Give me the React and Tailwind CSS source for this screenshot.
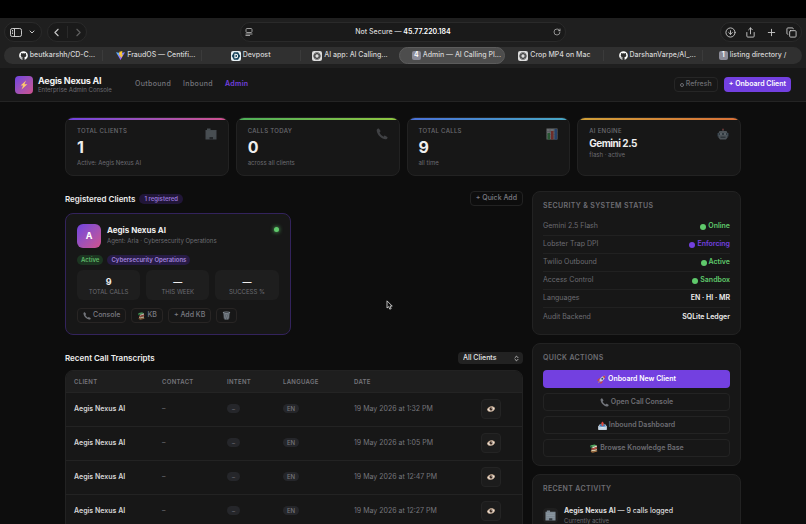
import { ChevronDown, ChevronLeft, ChevronRight, ChevronsUpDown, CircleArrowDown, Copy, Plus, RotateCw, Share } from 'lucide-react'
import { FaGithub } from 'react-icons/fa'

const tabs = [
  { title: 'beutkarshh/CD-C...', icon: 'github', pad: true, line: true },
  { title: 'FraudOS — Centifi...', icon: 'vite', pad: true, line: true },
  { title: 'Devpost', icon: 'devpost', line: true },
  { title: 'AI app: AI Calling...', icon: 'knot' },
  { title: 'Admin — AI Calling Pl...', icon: '4', active: true },
  { title: 'Crop MP4 on Mac', icon: 'knot', line: true },
  { title: 'DarshanVarpe/AI_...', icon: 'github', pad: true, line: true },
  { title: 'listing directory /', icon: '1' }
]

const stats = [
  { label: 'TOTAL CLIENTS', value: '1', note: 'Active: Aegis Nexus AI', bar: 'from-[#7040e0] to-[#d0508c]', icon: Building },
  { label: 'CALLS TODAY', value: '0', note: 'across all clients', bar: 'from-[#4caf58] to-[#8fc640]', icon: Phone },
  { label: 'TOTAL CALLS', value: '9', note: 'all time', bar: 'from-[#4a70d8] to-[#48a8c4]', icon: Chart },
  { label: 'AI ENGINE', value: 'Gemini 2.5', note: 'flash · active', bar: 'from-[#d0a038] to-[#d87038]', icon: Robot, small: true }
]

const statuses = [
  { label: 'Gemini 2.5 Flash', value: 'Online', color: 'text-[#5fc96b]', dot: 'bg-[#5fc96b]' },
  { label: 'Lobster Trap DPI', value: 'Enforcing', color: 'text-[#7340e0]', dot: 'bg-[#7340e0]' },
  { label: 'Twilio Outbound', value: 'Active', color: 'text-[#5fc96b]', dot: 'bg-[#5fc96b]' },
  { label: 'Access Control', value: 'Sandbox', color: 'text-[#5fc96b]', dot: 'bg-[#5fc96b]' },
  { label: 'Languages', value: 'EN · HI · MR', color: 'text-[#eeeeee]' },
  { label: 'Audit Backend', value: 'SQLite Ledger', color: 'text-[#eeeeee]' }
]

const calls = [
  '19 May 2026 at 1:32 PM',
  '19 May 2026 at 1:05 PM',
  '19 May 2026 at 12:47 PM',
  '19 May 2026 at 12:27 PM'
]

function Building({ className }) {
  return (
    <svg viewBox="0 0 24 24" className={className} aria-hidden="true">
      <path d="M1 4h3V1h7v3h12v19H1z" fill="#7e8a94" />
      <path d="M3 7h18v2H3zM3 11h18v2H3zM3 15h18v2H3z" fill="#8b97a0" />
      <path d="M9 18h7v5H9z" fill="#343b42" />
    </svg>
  )
}

function Phone({ className }) {
  return (
    <svg viewBox="0 0 24 24" className={className} aria-hidden="true">
      <path d="M4 1C2 2 1 3.500 1.500 6 3 14 10 21 18 22.500c2.500.5 4-.5 5-2.500.4-.8.1-1.500-.5-2l-4-2.500c-.8-.5-1.600-.4-2.200.3l-1.300 1.500C11.500 15.500 8.500 12.500 7 9l1.500-1.300c.7-.6.8-1.400.3-2.200L6 1.500C5.500.8 4.800.6 4 1z" fill="#72757b" />
    </svg>
  )
}

function Chart({ className }) {
  return (
    <svg viewBox="0 0 24 24" className={className} aria-hidden="true">
      <path d="M1 1h22v22H1z" fill="#cdd4da" />
      <path d="M1 7h22M1 13h22M1 18h22M8 1v22M16 1v22" stroke="#8f9aa3" strokeWidth="1" />
      <path d="M3 10h5v13H3z" fill="#3da453" />
      <path d="M10 6h5v17h-5z" fill="#d8463f" />
      <path d="M17 2h5v21h-5z" fill="#3974cf" />
    </svg>
  )
}

function Robot({ className }) {
  return (
    <svg viewBox="0 0 24 24" className={className} aria-hidden="true">
      <path d="M11 3h2v4h-2z" fill="#8d99a3" />
      <circle cx="12" cy="3" r="2" fill="#c05a5a" />
      <path d="M1 10h3v7H1zM20 10h3v7h-3z" fill="#59798f" />
      <path d="M5 6h14l2 4v9l-3 4H6l-3-4v-9z" fill="#8d9ca8" />
      <path d="M4 10h16v4H4z" fill="#4e6170" />
      <circle cx="8" cy="12" r="2" fill="#c3d3de" />
      <circle cx="16" cy="12" r="2" fill="#c3d3de" />
      <path d="M7 17h10v3H7z" fill="#4a5a66" />
    </svg>
  )
}

function Books({ className }) {
  return (
    <svg viewBox="0 0 24 24" className={className} aria-hidden="true">
      <path d="m3 4 12-3 6 3-12 4z" fill="#52ab62" />
      <path d="m3 4 6 4v4L3 8z" fill="#2e7c45" />
      <path d="m9 8 12-4v4L9 12z" fill="#e2d9c4" />
      <path d="m6 11 3 1 12-4 1 4-12 4-4-2z" fill="#b94c40" />
      <path d="m6 15 4 1 11-3v4l-11 3-4-2z" fill="#d9c9a6" />
      <path d="m5 18 5 2 12-3v3l-12 3-5-2z" fill="#a9713f" />
    </svg>
  )
}

function Trash({ className }) {
  return (
    <svg viewBox="0 0 24 24" className={className} aria-hidden="true">
      <path d="M3 4h18l-2 17c-2 3-12 3-14 0z" fill="#565d64" />
      <path d="m6 8 4 14M10 7l5 15M15 7l3 12M18 8l-4 14M14 7 9 22M9 7 6 19" stroke="#8c949b" strokeWidth="1" />
      <ellipse cx="12" cy="4" rx="10" ry="3" fill="#858d94" />
      <ellipse cx="12" cy="4" rx="7" ry="1.500" fill="#42484e" />
    </svg>
  )
}

function Rocket({ className }) {
  return (
    <svg viewBox="0 0 24 24" className={className} aria-hidden="true">
      <path d="m8 8-6 3-1 5 6-1zM16 16l-3 6-5 1 1-6z" fill="#c8453f" />
      <path d="M22 2c-7 0-13 5-16 12l4 4C17 15 22 9 22 2z" fill="#c9ced4" />
      <path d="M22 2c-3 0-5 .7-7 2l5 5c1.300-2 2-4.300 2-7z" fill="#c8453f" />
      <circle cx="14" cy="10" r="2.500" fill="#344c66" />
      <path d="m6 16-4 6 6-4z" fill="#f0a437" />
    </svg>
  )
}

function Inbox({ className }) {
  return (
    <svg viewBox="0 0 24 24" className={className} aria-hidden="true">
      <path d="m4 9-3 5v9h22v-9l-3-5z" fill="#dfe5ea" />
      <path d="M5 10h14l2 5H3z" fill="#3d79b8" />
      <path d="M1 15h7l1 3h6l1-3h7v8H1z" fill="#c4d5e4" />
      <path d="M10 7H7l5-6 5 6h-3v6h-4z" fill="#d9463e" />
    </svg>
  )
}

function Eye({ className }) {
  return (
    <svg viewBox="0 0 24 24" className={className} aria-hidden="true">
      <path d="M0 14C3 3 18 0 24 9c0 11-18 17-24 5z" fill="#d4b9a0" />
      <path d="M3 14c4-7 13-9 18-4-2 8-13 11-18 4z" fill="#f3eee8" />
      <circle cx="12" cy="12" r="5" fill="#5a4033" />
      <circle cx="12" cy="12" r="2.500" fill="#120e0c" />
      <circle cx="14" cy="10" r="1" fill="#fff" />
    </svg>
  )
}

function TabIcon({ name }) {
  if (name === 'github') return <FaGithub className="size-[9px] shrink-0 text-white" />
  if (name === 'vite') {
    return (
      <svg viewBox="0 0 24 24" className="size-[9px] shrink-0" aria-hidden="true">
        <defs>
          <linearGradient id="vite" x1="0" y1="0" x2="1" y2="1">
            <stop offset="0" stopColor="#4cc3ff" />
            <stop offset="1" stopColor="#bd34fe" />
          </linearGradient>
        </defs>
        <path d="M0 3 12 24 24 3 12 5z" fill="url(#vite)" />
        <path d="m17 0-8 2-1 10 4-1-1 5 3-1-1 5 6-11-4 1 1-4z" fill="#ffc82e" />
      </svg>
    )
  }
  if (name === 'devpost') {
    return (
      <svg viewBox="0 0 24 24" className="size-[10px] shrink-0" aria-hidden="true">
        <rect width="24" height="24" rx="5" fill="#e8f1f5" />
        <path d="M7 3h10l5 9-5 9H7l-5-9z" fill="#123f57" />
        <path d="M9.500 8v8h2.500c5 0 5-8 0-8z" fill="none" stroke="#fff" strokeWidth="2.500" />
      </svg>
    )
  }
  if (name === 'knot') {
    return (
      <svg viewBox="0 0 24 24" className="size-[10px] shrink-0" aria-hidden="true">
        <rect width="24" height="24" rx="5" fill="#dcdcdc" />
        <g fill="none" stroke="#333" strokeWidth="1.600">
          <ellipse cx="12" cy="12" rx="8.500" ry="5" />
          <ellipse cx="12" cy="12" rx="8.500" ry="5" transform="rotate(60 12 12)" />
          <ellipse cx="12" cy="12" rx="8.500" ry="5" transform="rotate(120 12 12)" />
        </g>
      </svg>
    )
  }
  return (
    <span className="flex size-[9px] shrink-0 items-center justify-center rounded-xs bg-[#8b8b98] text-[7px] font-semibold text-white">
      {name}
    </span>
  )
}

function Browser() {
  return (
    <div className="bg-[#1f1f1f] px-1 pt-1 pb-1">
      <div className="flex h-5 items-center justify-between text-[#c8c8c8]">
        <div className="flex w-[236px] gap-[5px]">
          <div className="flex h-5 w-[38px] items-center justify-center gap-1.5 rounded-full border border-[#2a2a2a] bg-[#1a1a1a]">
            <button aria-label="Sidebar">
              <svg viewBox="0 0 24 18" className="h-[9px] w-3" fill="none" stroke="currentColor" strokeWidth="2" aria-hidden="true">
                <rect x="1" y="1" width="22" height="16" rx="3.500" />
                <path d="M9 1v16M4 5h2M4 8h2M4 11h2" />
              </svg>
            </button>
            <button aria-label="Tab groups"><ChevronDown size={8} strokeWidth={3} /></button>
          </div>
          <div className="flex h-5 w-10 items-center justify-center gap-1 rounded-full border border-[#2a2a2a] bg-[#1a1a1a]">
            <button aria-label="Back"><ChevronLeft size={13} /></button>
            <span className="h-3 w-px bg-[#2a2a2a]" />
            <button aria-label="Forward" className="text-[#606060]"><ChevronRight size={13} /></button>
          </div>
        </div>
        <div className="flex h-5 flex-1 items-center justify-between rounded-full border border-[#2a2a2a] bg-[#1a1a1a] px-1">
          <svg viewBox="0 0 16 16" className="size-2 text-[#9a9a9a]" fill="none" stroke="currentColor" strokeWidth="2" aria-hidden="true">
            <rect x="2" y="1" width="12" height="8" rx="2" />
            <path d="M1 12h14M1 15h9" />
          </svg>
          <p className="text-[7px] font-medium text-[#d8d8d8]">Not Secure — <span className="font-semibold text-white">45.77.220.184</span></p>
          <button aria-label="Reload"><RotateCw size={8} /></button>
        </div>
        <div className="flex w-[236px] justify-end">
          <div className="flex h-5 w-[82px] items-center justify-between rounded-full border border-[#2a2a2a] bg-[#1a1a1a] px-1">
            <button aria-label="Downloads"><CircleArrowDown size={11} /></button>
            <button aria-label="Share"><Share size={11} /></button>
            <button aria-label="New tab"><Plus size={11} /></button>
            <button aria-label="Show tabs"><Copy size={11} /></button>
          </div>
        </div>
      </div>
      <div className="mt-[5px] grid h-[17px] grid-cols-[1fr_1fr_1fr_1fr_106px_1fr_1fr_1fr] items-center rounded-full bg-[#303030] text-[7px] font-medium text-[#d4d4d4]">
        {tabs.map((tab) => (
          <button
            key={tab.title}
            className={
              tab.active
                ? 'flex h-[17px] items-center justify-center gap-0.5 rounded-full border border-[#5c5c5c] bg-[#4d4d4d] pl-2 whitespace-nowrap'
                : `flex h-[11px] min-w-0 items-center justify-center gap-0.5 whitespace-nowrap ${tab.pad ? 'pl-2' : ''} ${tab.line ? 'border-r border-[#3b3b3b]' : ''}`
            }
          >
            <TabIcon name={tab.icon} />
            {tab.title}
          </button>
        ))}
      </div>
    </div>
  )
}

function Header() {
  return (
    <header className="flex h-[34px] items-center border-b border-[#242424] bg-[#171717] px-[15px]">
      <div className="flex size-[18px] items-center justify-center rounded-sm bg-linear-135 from-[#7040e0] to-[#d0508c]">
        <svg viewBox="0 0 24 24" className="size-[10px]" aria-hidden="true">
          <path d="M17 1 4 13h6l-4 10L20 10h-7z" fill="#ffcb6b" />
        </svg>
      </div>
      <div className="ml-[5px] w-[97px]">
        <p className="text-[9px] leading-[10px] font-bold tracking-tight text-[#f2f2f2]">Aegis Nexus AI</p>
        <p className="text-[6px] leading-[8px] text-[#6c6c72]">Enterprise Admin Console</p>
      </div>
      <nav className="flex gap-3 text-[7px] font-medium tracking-wider text-[#76767c]">
        <a href="#outbound">Outbound</a>
        <a href="#inbound">Inbound</a>
        <a href="#admin" className="font-semibold text-[#7340e0]">Admin</a>
      </nav>
      <div className="ml-auto flex gap-1.5 text-[7px]">
        <button className="flex h-[15px] items-center gap-0.5 rounded-sm border border-[#262626] px-[5px] font-medium text-[#6c6c72]">
          <span className="size-1 rounded-full border border-current" />
          Refresh
        </button>
        <button className="h-[15px] rounded-sm bg-[#7340e0] px-[5px] font-semibold text-white">+ Onboard Client</button>
      </div>
    </header>
  )
}

function StatCard({ stat }) {
  const Icon = stat.icon
  return (
    <div className="h-[59px] overflow-hidden rounded-lg border border-[#222222] bg-[#171717]">
      <div className={`h-0.5 bg-linear-to-r ${stat.bar}`} />
      <div className="flex justify-between px-[11px] pt-[7px]">
        <div>
          <p className="text-[6px] leading-[8px] font-medium tracking-wider text-[#6c6c72]">{stat.label}</p>
          <p className={stat.small ? 'text-[10px] leading-4 font-bold tracking-tighter text-[#eeeeee]' : 'text-[16px] leading-6 font-bold text-[#eeeeee]'}>
            {stat.value}
          </p>
          <p className="text-[6px] leading-[7px] text-[#6c6c72]">{stat.note}</p>
        </div>
        <Icon className="mt-px size-3 opacity-45" />
      </div>
    </div>
  )
}

function ClientCard() {
  const button = 'flex h-[15px] items-center gap-0.5 rounded-sm border border-[#282524] px-[5px]'
  return (
    <article className="rounded-lg border border-[#33235c] bg-[#171717] p-[11px] pt-2.5">
      <div className="flex">
        <div className="flex size-6 items-center justify-center rounded-md bg-linear-135 from-[#7040e0] to-[#d0508c] text-[9px] font-bold text-white">A</div>
        <div className="ml-1.5 pt-px">
          <h3 className="text-[8px] leading-[11px] font-bold text-[#eeeeee]">Aegis Nexus AI</h3>
          <p className="text-[6px] leading-[9px] text-[#6c6c72]">Agent: Aria · Cybersecurity Operations</p>
        </div>
        <span className="mt-[3px] ml-auto size-[5px] rounded-full bg-[#5fc96b] shadow-[0_0_4px_#5fc96b]" />
      </div>
      <div className="mt-[7px] flex gap-1 text-[6px] leading-[10px] font-semibold">
        <span className="rounded-full bg-[#1c3521] px-1 text-[#5fb968]">Active</span>
        <span className="rounded-full bg-[#271b45] px-1 text-[#a183dc]">Cybersecurity Operations</span>
      </div>
      <div className="mt-[5px] grid grid-cols-3 gap-1.5 text-center">
        {[['9', 'TOTAL CALLS'], ['—', 'THIS WEEK'], ['—', 'SUCCESS %']].map(([value, label]) => (
          <div key={label} className="h-[30px] rounded-md bg-[#1e1e1e] pt-1.5">
            <p className="text-[9px] leading-[11px] font-bold text-[#eeeeee]">{value}</p>
            <p className="text-[6px] leading-[9px] text-[#6c6c72]">{label}</p>
          </div>
        ))}
      </div>
      <div className="mt-2 flex gap-[5px] text-[7px] font-medium text-[#7b7b82]">
        <button className={button}><Phone className="size-2" /> Console</button>
        <button className={button}><Books className="size-2 opacity-80" /> KB</button>
        <button className={button}>+ Add KB</button>
        <button className={button} aria-label="Delete client"><Trash className="size-[9px]" /></button>
      </div>
    </article>
  )
}

function Transcripts() {
  return (
    <div className="mt-1.5 overflow-hidden rounded-t-lg border border-[#222222] bg-[#171717]">
      <table className="w-full table-fixed text-left text-[7px] text-[#76767c]">
        <colgroup>
          <col className="w-[88px]" />
          <col className="w-[65px]" />
          <col className="w-14" />
          <col className="w-[71px]" />
          <col />
          <col className="w-[41px]" />
        </colgroup>
        <thead>
          <tr className="h-[21px] border-b border-[#242424] bg-[#1e1e1e] text-[6px] tracking-wider">
            <th className="pl-2 font-semibold">CLIENT</th>
            <th className="pl-2 font-semibold">CONTACT</th>
            <th className="pl-2 font-semibold">INTENT</th>
            <th className="pl-2 font-semibold">LANGUAGE</th>
            <th className="pl-2 font-semibold">DATE</th>
            <th aria-label="View" />
          </tr>
        </thead>
        <tbody>
          {calls.map((date) => (
            <tr key={date} className="h-[34px] border-b border-[#232323]">
              <td className="pl-2 font-semibold text-[#d6d6d6]">Aegis Nexus AI</td>
              <td className="pl-2">–</td>
              <td className="pl-2"><span className="rounded-full bg-[#25262a] px-[5px] py-px text-[6px]">–</span></td>
              <td className="pl-2"><span className="rounded-full bg-[#25262a] px-1 py-px text-[6px] font-medium">EN</span></td>
              <td className="pl-2">{date}</td>
              <td>
                <button aria-label="View transcript" className="flex size-5 items-center justify-center rounded-sm border border-[#242424] bg-[#1c1c1c]">
                  <Eye className="size-2" />
                </button>
              </td>
            </tr>
          ))}
        </tbody>
      </table>
    </div>
  )
}

function Panel({ title, children }) {
  return (
    <section className="rounded-lg border border-[#222222] bg-[#171717] px-2.5 pt-[9px] pb-2">
      <h2 className="text-[7px] leading-[10px] font-semibold tracking-wider text-[#6d6d73]">{title}</h2>
      {children}
    </section>
  )
}

export default function App() {
  const action = 'flex h-[18px] w-full items-center justify-center gap-0.5 rounded-sm border border-[#232323]'
  return (
    <div className="relative h-screen overflow-hidden bg-[#0d0d0d] pt-[18px] font-[Inter,sans-serif] before:absolute before:inset-x-0 before:top-0 before:h-[18px] before:bg-black">
      <Browser />
      <Header />
      <main className="px-[65px] pt-[15px]">
        <div className="grid grid-cols-4 gap-[7px]">
          {stats.map((stat) => <StatCard key={stat.label} stat={stat} />)}
        </div>
        <div className="mt-[15px] grid grid-cols-[1fr_209px] items-start gap-[9px]">
          <div>
            <div className="flex h-[15px] items-center">
              <h2 className="text-[8px] font-semibold text-[#eeeeee]">Registered Clients</h2>
              <span className="ml-1 rounded-full bg-[#211638] px-[5px] text-[6px] leading-[10px] font-semibold text-[#9474d4]">1 registered</span>
              <button className="ml-auto h-[15px] rounded-sm border border-[#222222] px-[5px] text-[7px] font-medium text-[#7b7b82]">+ Quick Add</button>
            </div>
            <div className="mt-[7px] grid grid-cols-2 gap-[7px]">
              <ClientCard />
            </div>
            <div className="mt-[17px] flex h-3 items-center justify-between">
              <h2 className="text-[8px] font-semibold text-[#eeeeee]">Recent Call Transcripts</h2>
              <div className="relative">
                <select aria-label="Filter by client" className="block h-3 w-[65px] appearance-none rounded-sm bg-[#222222] pl-[5px] text-[7px] leading-3 font-medium text-[#e4e4e4]">
                  <option>All Clients</option>
                </select>
                <ChevronsUpDown size={7} strokeWidth={3} className="pointer-events-none absolute top-[3px] right-[3px] text-[#cccccc]" />
              </div>
            </div>
            <Transcripts />
          </div>
          <aside className="flex flex-col gap-2">
            <Panel title="SECURITY & SYSTEM STATUS">
              <dl className="mt-[7px] divide-y divide-[#212121] text-[7px]">
                {statuses.map((row) => (
                  <div key={row.label} className="flex h-[18px] items-center justify-between">
                    <dt className="text-[#6c6c72]">{row.label}</dt>
                    <dd className={`flex items-center gap-0.5 font-semibold ${row.color}`}>
                      {row.dot && <span className={`size-1.5 rounded-full ${row.dot}`} />}
                      {row.value}
                    </dd>
                  </div>
                ))}
              </dl>
            </Panel>
            <Panel title="QUICK ACTIONS">
              <div className="mt-[7px] flex flex-col gap-[5px] text-[7px] font-semibold text-[#6d6d73]">
                <button className="flex h-[18px] w-full items-center justify-center gap-0.5 rounded-sm bg-[#7340e0] text-white">
                  <Rocket className="size-[9px]" /> Onboard New Client
                </button>
                <button className={action}><Phone className="size-[9px]" /> Open Call Console</button>
                <button className={action}><Inbox className="size-[9px]" /> Inbound Dashboard</button>
                <button className={action}><Books className="size-[9px]" /> Browse Knowledge Base</button>
              </div>
            </Panel>
            <Panel title="RECENT ACTIVITY">
              <div className="mt-3 flex items-center gap-1.5">
                <span className="flex size-[15px] items-center justify-center rounded-sm bg-[#1f1f1f]"><Building className="size-[11px]" /></span>
                <div>
                  <p className="text-[7px] leading-[10px] font-medium text-[#dddddd]"><b>Aegis Nexus AI</b> — 9 calls logged</p>
                  <p className="text-[6px] leading-[9px] text-[#6c6c72]">Currently active</p>
                </div>
              </div>
            </Panel>
          </aside>
        </div>
      </main>
      {/* mouse pointer */}
      <svg viewBox="0 0 12 18" className="pointer-events-none absolute top-[300px] left-[386px] h-[10px] w-[7px]" aria-hidden="true">
        <path d="M1.500 1.500v13l3-2.500 2 4.500 2.500-1-2-4.500h4z" fill="#111" stroke="#ddd" strokeWidth="1.500" />
      </svg>
    </div>
  )
}
